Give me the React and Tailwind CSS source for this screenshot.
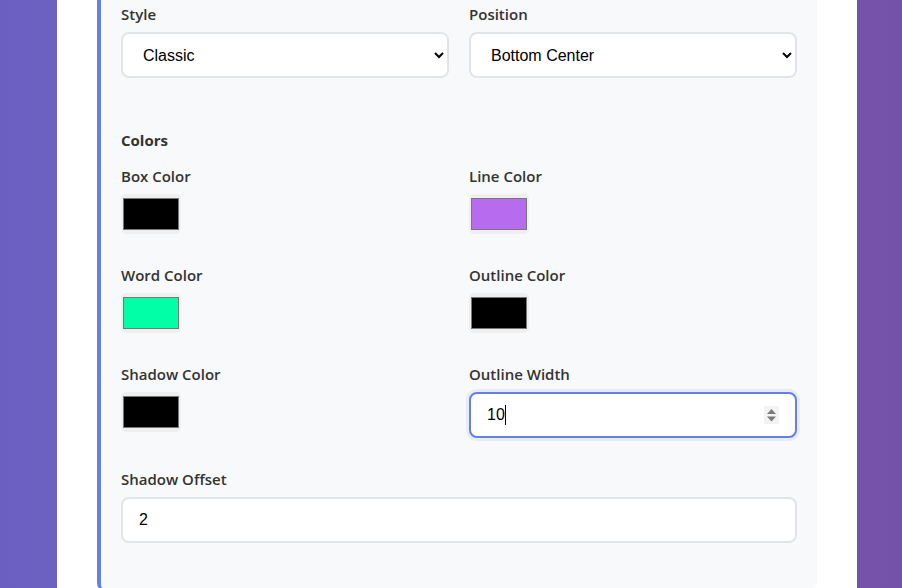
import React from "react";

const labelCls =
  "block text-[15px] leading-[20px] font-semibold text-[#333] mb-2 font-['Open_Sans',sans-serif]";
const inputCls =
  "block w-full h-[46px] px-4 border-2 border-[#e1e5e9] rounded-lg bg-white text-base text-black font-['Liberation_Sans',Arial,sans-serif] outline-none";

function ColorField({ label, color }) {
  return (
    <div>
      <label className={labelCls}>{label}</label>
      <div className="w-[60px] h-[40px] rounded-[5px] bg-[#efefef] px-[2px] py-[4px]">
        <div className="w-full h-full border border-[#777]" style={{ background: color }} />
      </div>
    </div>
  );
}

export default function App() {
  return (
    <div className="w-full h-[588px] overflow-hidden bg-[linear-gradient(90deg,#6b60c2,#7452a8)]">
      <div className="ml-[57px] w-[800px] h-[588px] bg-white px-10">
        <div className="h-[591px] bg-[#f8f9fa] border-l-4 border-[#667eea] rounded-b-lg px-5 pt-[4px]">
          <div className="grid grid-cols-2 gap-x-5">
            <div>
              <label className={labelCls}>Style</label>
              <select className={inputCls + " appearance-auto mt-[1px]"} defaultValue="Classic">
                <option>Classic</option>
                <option>Modern</option>
              </select>
            </div>
            <div>
              <label className={labelCls}>Position</label>
              <select className={inputCls + " appearance-auto mt-[1px]"} defaultValue="Bottom Center">
                <option>Bottom Center</option>
                <option>Top Center</option>
              </select>
            </div>
          </div>

          <h3 className="mt-[52px] mb-4 text-[15px] leading-[20px] font-bold text-[#333] font-['Open_Sans',sans-serif]">
            Colors
          </h3>

          <div className="grid grid-cols-2 gap-x-5 gap-y-[31px]">
            <ColorField label="Box Color" color="#000000" />
            <ColorField label="Line Color" color="#b76cf0" />
            <ColorField label="Word Color" color="#00ffa6" />
            <ColorField label="Outline Color" color="#000000" />
            <ColorField label="Shadow Color" color="#000000" />
            <div>
              <label className={labelCls}>Outline Width</label>
              <div className="relative h-[46px] px-4 border-2 border-[#667eea] rounded-lg bg-white shadow-[0_0_0_3px_rgba(102,126,234,0.1)] flex items-center text-base text-black font-['Liberation_Sans',Arial,sans-serif]">
                <span>10</span>
                <span className="inline-block w-px h-[20px] bg-black" />
                <svg
                  className="absolute right-[16px] top-[12px]"
                  width="15"
                  height="18"
                  viewBox="0 0 15 18"
                >
                  <rect width="15" height="18" fill="#f3f3f3" />
                  <path d="M3 8 L7.5 3 L12 8 Z" fill="#7a7a7a" />
                  <path d="M3 10.5 L7.5 15.5 L12 10.5 Z" fill="#7a7a7a" />
                </svg>
              </div>
            </div>
            <div className="col-span-2">
              <label className={labelCls}>Shadow Offset</label>
              <input className={inputCls} type="text" defaultValue="2" />
            </div>
          </div>
        </div>
      </div>
    </div>
  );
}
